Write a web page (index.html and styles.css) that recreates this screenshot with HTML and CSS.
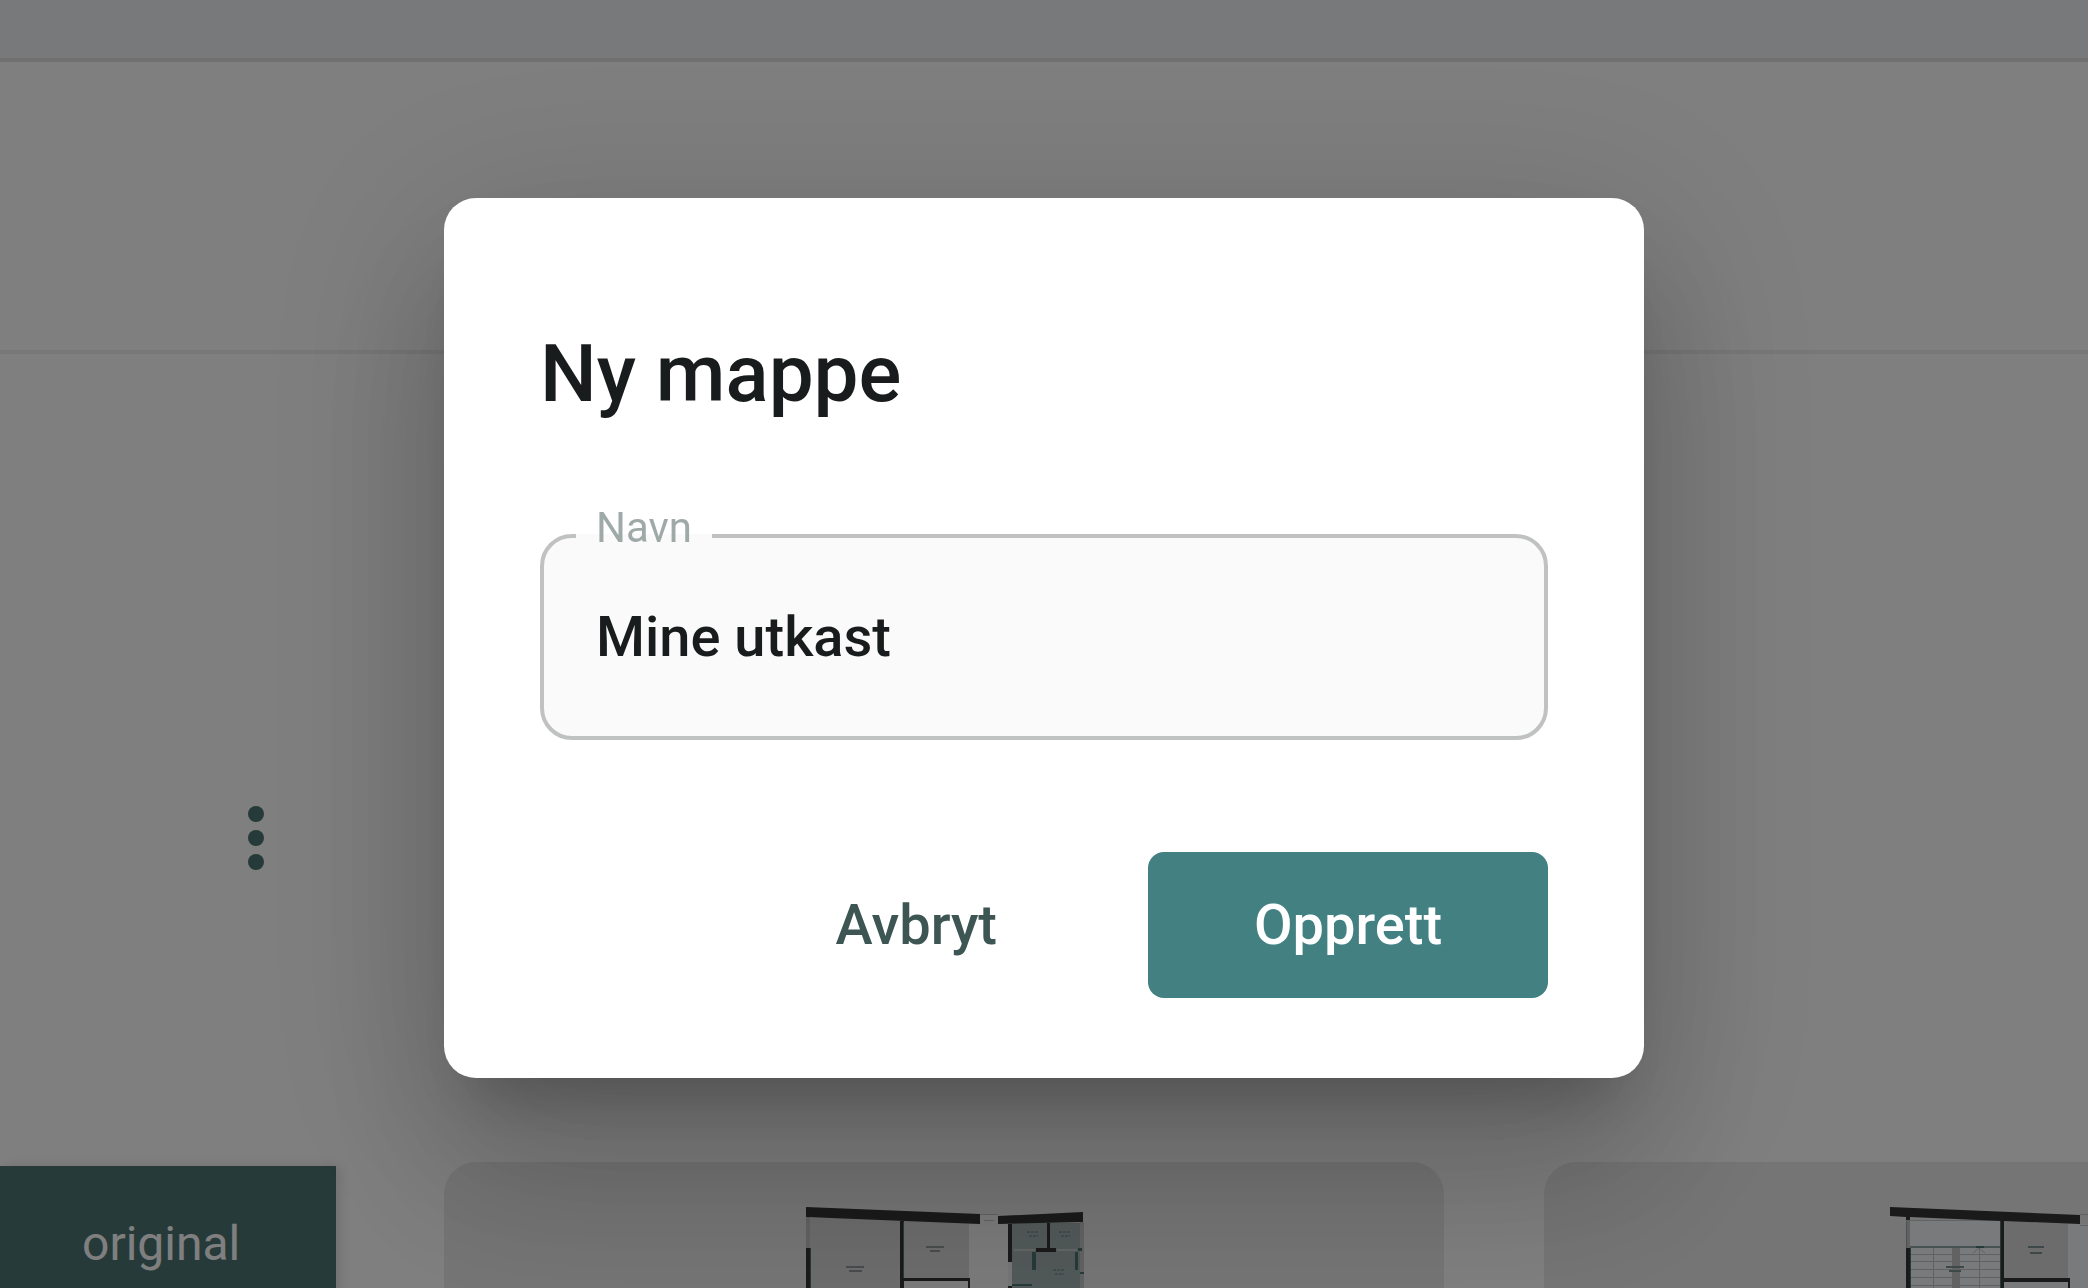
FILE: index.html
```html
<!DOCTYPE html>
<html lang="no">
<head>
<meta charset="utf-8">
<title>Ny mappe</title>
<link rel="stylesheet" href="styles.css">
</head>
<body>
<div class="page">
  <header class="topbar"></header>
  <div class="toolbar"></div>
  <main class="content">
    <div class="folder-row">
      <button class="more" type="button" aria-label="Flere valg">
        <svg width="16" height="64" viewBox="0 0 16 64" fill="currentColor"><circle cx="8" cy="8" r="8"/><circle cx="8" cy="32" r="8"/><circle cx="8" cy="56" r="8"/></svg>
      </button>
    </div>
    <div class="cards">
      <article class="card-original"><span class="tag">original</span></article>
      <article class="card">
        <svg width="276" height="200" viewBox="0 0 276 200" overflow="visible">
          <path fill="#d8d8d8" d="M4 12h90v188H4zM98 15h65v57H98z"/>
          <path fill="#f4f4f4" d="M163 18h39v182h-39zM174 9h18v9h-18zM98 75h64v125H98z"/>
          <path fill="#c4c4c4" d="M0 11h4v31H0zM274 16h4v184h-4zM174 8h18v1h-18zM178 14h10v1h-10z"/>
          <path fill="#a4b2b2" d="M206 17h68v183h-68z"/>
          <path fill="#343434" d="M0 1l174 7v10L0 11zM192 10l85-4v10l-85 2zM0 42h4v158H0zM94 14h4v186h-4zM98 72h66v128h-2V75H98zM202 18h4v38h-4zM202 80h4v120h-4zM241 17h3v25h6v4h-20v-4h11z"/>
          <path fill="#4c7474" d="M226 46h4v18h-4zM269 46h3v18h-3zM206 78h20v2h-20zM272 42h4v3h-4zM274 66h4v2h-4zM97 16h1v56h-1zM4 42h1v158H4z"/>
          <path fill="#c8cccc" d="M208 43h21v2h-21zM251 43h20v2h-20z"/>
          <path fill="none" stroke="#909898" stroke-width="2" d="M40 61h18M43 65h13M120 41h18M124 45h10"/>
          <path fill="none" stroke="#5f8080" stroke-dasharray="3 1" d="M221 26h12M223 30h9M253 26h12M255 30h9M247 64h12M249 68h9"/>
        </svg>
      </article>
      <article class="card">
        <svg width="308" height="200" viewBox="0 0 308 200">
          <path fill="#f2f4f6" d="M20 15h91v185H20zM178 18h130v182H178zM114 76h64v124h-64z"/>
          <path fill="#d8d8d8" d="M114 15h64v57h-64z"/>
          <path fill="#c4c4c4" d="M16 14h4v28h-4zM20 14h91v1H20zM190 8h20v1h-20zM190 19h20v1h-20zM62 42h8v158h-8z"/>
          <path fill="none" stroke="#c0c4c4" d="M20 48.500h91M20 55.500h91M20 63.500h91M20 71.500h91M20 79.500h91M43.500 42v158M89.500 42v158M83 47l6-5 6 5"/>
          <path fill="#8fa4a4" d="M20 40h91v2H20zM16 15h1v27h-1z"/>
          <path fill="#343434" d="M0 1l190 8v9l-76-3v57h66v128h-2V76h-64v124h-3V15L20 11v3h-4v-3L0 10zM16 42h4v158h-4z"/>
          <path fill="#4c7474" d="M110 15h1v185h-1zM20 42h1v158h-1zM86 40h8v2h-8z"/>
          <path fill="none" stroke="#7c9090" stroke-width="2" d="M56 61h18M59 65h12M138 41h16M140 47h12"/>
        </svg>
      </article>
    </div>
  </main>
</div>
<div class="backdrop">
  <form class="dialog" role="dialog" aria-modal="true" aria-labelledby="dialog-title">
    <h2 class="title" id="dialog-title">Ny mappe</h2>
    <fieldset class="field">
      <legend class="legend"><label for="name">Navn</label></legend>
      <input class="input" id="name" type="text" value="Mine utkast">
    </fieldset>
    <div class="actions">
      <button class="btn btn-text" type="button">Avbryt</button>
      <button class="btn btn-primary" type="submit">Opprett</button>
    </div>
  </form>
</div>
</body>
</html>
```
FILE: styles.css
```css
* { box-sizing: border-box; }
body { margin: 0; font-family: Roboto, "Liberation Sans", sans-serif; color: #191c1c; background: #fff; }
button, input { font: inherit; }
.page { display: flex; flex-direction: column; height: 100vh; overflow: hidden; }
.topbar { flex: none; height: 62px; background: #f0f2f5; border-bottom: 4px solid #e0e0e0; }
.toolbar { flex: none; height: 292px; border-bottom: 4px solid #f0f0f0; }
.folder-row { height: 808px; padding: 452px 248px 0; }
.more { display: block; padding: 0; border: 0; background: none; color: #4c7474; }
.more svg { display: block; }
.cards { display: grid; grid-template-columns: 344px 1000px 1000px; column-gap: 100px; height: 400px; }
.card-original { padding-top: 4px; }
.tag { display: block; width: 336px; height: 300px; padding: 50px 0 0 82px; background: #4c7474; color: #fff; font-size: 48px; line-height: 56px; box-shadow: 4px 0 12px rgba(0, 0, 0, 0.12); }
.card { display: flex; justify-content: center; align-items: flex-start; padding-top: 44px; border-radius: 32px; background: #ebebeb; }
.backdrop { position: fixed; inset: 0; display: flex; align-items: center; justify-content: center; padding-bottom: 12px; background: rgba(0, 0, 0, 0.5); }
.dialog {
  width: 1200px; max-width: 100%; padding: 128px 96px 80px; border-radius: 32px; background: #fff;
  box-shadow: 0 44px 60px -28px rgba(0, 0, 0, 0.2), 0 96px 152px 12px rgba(0, 0, 0, 0.14), 0 36px 184px 32px rgba(0, 0, 0, 0.12);
}
.title { margin: 0 0 82px; font-size: 80px; line-height: 96px; font-weight: 500; }
.field { margin: 0; padding: 0; min-width: 0; border: 4px solid #c0c2c2; border-radius: 32px; background: #fafafa; }
.legend { margin-left: 32px; padding: 0 20px 16px; color: #9ea9a8; font-size: 42px; line-height: 48px; }
.legend label { display: block; }
.input { display: block; width: 100%; height: 168px; padding: 0 52px 30px; border: 0; outline: 0; background: none; color: inherit; font-size: 56px; font-weight: 500; }
.actions { display: flex; justify-content: flex-end; gap: 80px; margin-top: 112px; }
.btn { height: 146px; padding: 0 71px; border: 0; border-radius: 16px; font-size: 56px; font-weight: 500; }
.btn-text { background: none; color: #3d5654; }
.btn-primary { width: 400px; background: #428082; color: #fff; }
```
